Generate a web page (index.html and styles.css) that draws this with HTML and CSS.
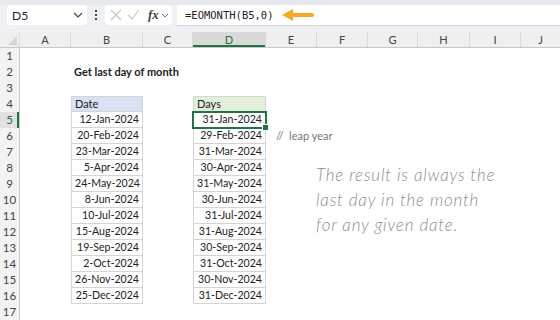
FILE: index.html
```html
<!DOCTYPE html>
<html lang="en">
<head>
    <meta charset="UTF-8">
    <meta name="viewport" content="width=device-width, initial-scale=1.0">
    <title>Get last day of month</title>
    <link rel="stylesheet" href="styles.css">
</head>
<body>
    <div class="toolbar">
        <div class="namebox">
            <span>D5</span>
            <svg class="chev" width="10" height="6" viewBox="0 0 10 6"><path d="M1 1l4 4 4-4" fill="none" stroke="#444" stroke-width="1.2"/></svg>
        </div>
        <div class="dots"><i></i><i></i><i></i></div>
        <div class="fxbox">
            <svg width="12" height="12" viewBox="0 0 12 12"><path d="M1 1l10 10M11 1L1 11" stroke="#c4c4c4" stroke-width="1.1"/></svg>
            <svg width="13" height="12" viewBox="0 0 13 12"><path d="M1 6l4 4 7-9" fill="none" stroke="#c4c4c4" stroke-width="1.1"/></svg>
            <span class="fx">fx</span>
            <svg width="8" height="5" viewBox="0 0 8 5"><path d="M1 1l3 3 3-3" fill="none" stroke="#777" stroke-width="1"/></svg>
        </div>
        <div class="formula">
            <span>=EOMONTH(B5,0)</span>
            <svg class="arrow" width="32" height="14" viewBox="0 0 32 14"><path d="M10 7h20" stroke="#f5a91c" stroke-width="4" stroke-linecap="round"/><path d="M0 7l11-6v12z" fill="#f5a91c"/></svg>
        </div>
    </div>

    <div class="sheet">
        <div class="row head">
            <div class="corner"></div>
            <div>A</div><div>B</div><div>C</div><div class="sel">D</div><div>E</div>
            <div>F</div><div>G</div><div>H</div><div>I</div><div>J</div>
        </div>
        <div class="row"><div class="rh">1</div></div>
        <div class="row"><div class="rh">2</div><div class="cell cb title">Get last day of month</div></div>
        <div class="row"><div class="rh">3</div></div>
        <div class="row"><div class="rh">4</div><div class="cell cb tb top hd-date">Date</div><div class="cell cd tb top hd-days">Days</div></div>
        <div class="row"><div class="rh sel">5</div><div class="cell cb tb num">12-Jan-2024</div><div class="cell cd tb num active">31-Jan-2024</div></div>
        <div class="row"><div class="rh">6</div><div class="cell cb tb num">20-Feb-2024</div><div class="cell cd tb num">29-Feb-2024</div><div class="cell ce note">// &nbsp;leap year</div></div>
        <div class="row"><div class="rh">7</div><div class="cell cb tb num">23-Mar-2024</div><div class="cell cd tb num">31-Mar-2024</div></div>
        <div class="row"><div class="rh">8</div><div class="cell cb tb num">5-Apr-2024</div><div class="cell cd tb num">30-Apr-2024</div></div>
        <div class="row"><div class="rh">9</div><div class="cell cb tb num">24-May-2024</div><div class="cell cd tb num">31-May-2024</div></div>
        <div class="row"><div class="rh">10</div><div class="cell cb tb num">8-Jun-2024</div><div class="cell cd tb num">30-Jun-2024</div></div>
        <div class="row"><div class="rh">11</div><div class="cell cb tb num">10-Jul-2024</div><div class="cell cd tb num">31-Jul-2024</div></div>
        <div class="row"><div class="rh">12</div><div class="cell cb tb num">15-Aug-2024</div><div class="cell cd tb num">31-Aug-2024</div></div>
        <div class="row"><div class="rh">13</div><div class="cell cb tb num">19-Sep-2024</div><div class="cell cd tb num">30-Sep-2024</div></div>
        <div class="row"><div class="rh">14</div><div class="cell cb tb num">2-Oct-2024</div><div class="cell cd tb num">31-Oct-2024</div></div>
        <div class="row"><div class="rh">15</div><div class="cell cb tb num">26-Nov-2024</div><div class="cell cd tb num">30-Nov-2024</div></div>
        <div class="row"><div class="rh">16</div><div class="cell cb tb num">25-Dec-2024</div><div class="cell cd tb num">31-Dec-2024</div></div>
        <div class="row"><div class="rh">17</div></div>

        <div class="textbox">The result is always the<br>last day in the month<br>for any given date.</div>
    </div>
</body>
</html>
```

FILE: styles.css
```css
body {
    margin: 0;
    width: 560px;
    height: 320px;
    overflow: hidden;
    background: #fff;
    font-family: Lato, "Liberation Sans", sans-serif;
    color: #222;
}

/* formula bar */
.toolbar {
    height: 32px;
    box-sizing: border-box;
    background: #eef0f3;
    border-top: 5px solid #e6e9ed;
    display: flex;
    align-items: flex-start;
    padding-left: 7px;
}
.namebox {
    width: 80px;
    height: 20px;
    box-sizing: border-box;
    background: #fff;
    border-radius: 4px;
    display: flex;
    align-items: center;
    justify-content: space-between;
    padding: 0 4px 0 5px;
    font-size: 12px;
    color: #222;
}
.dots {
    width: 18px;
    height: 20px;
    display: flex;
    flex-direction: column;
    align-items: center;
    justify-content: center;
    gap: 2px;
}
.dots i {
    width: 2px;
    height: 2px;
    background: #444;
}
.fxbox {
    width: 67px;
    height: 20px;
    box-sizing: border-box;
    background: #fff;
    border-radius: 4px;
    display: flex;
    align-items: center;
    gap: 5px;
    padding-left: 5px;
}
.fx {
    font-family: "Liberation Serif", serif;
    font-style: italic;
    font-weight: bold;
    font-size: 13px;
    color: #444;
    margin-left: 3px;
    margin-right: -3px;
}
.formula {
    flex: 1;
    height: 20px;
    margin-left: 5px;
    background: #fff;
    border-bottom: 1px solid #d5d9df;
    display: flex;
    align-items: center;
    padding-left: 8px;
    font-family: "DejaVu Sans Mono", monospace;
    font-size: 10.5px;
    color: #222;
}
.arrow {
    margin-left: 8px;
}

/* grid */
.sheet {
    position: relative;
}
.row {
    display: grid;
    grid-template-columns: 20px 51px 72px 50px 73px 51px 51px 50px 52px 51px 40px;
    height: 16px;
}
.head {
    height: 15px;
    background: #efefef;
    border-bottom: 1px solid #c8c8c8;
    font-size: 11px;
    color: #444;
}
.head div {
    border-right: 1px solid #dadada;
    text-align: center;
    line-height: 15px;
}
.head .corner {
    position: relative;
    background: #efefef;
}
.head .corner::after {
    content: "";
    position: absolute;
    right: 2px;
    bottom: 2px;
    border-left: 9px solid transparent;
    border-bottom: 9px solid #d6d6d6;
}
.head .sel {
    background: #d9d9d9;
    color: #1e7145;
    box-shadow: inset 0 -2px 0 #217346;
}
.rh {
    grid-column: 1;
    background: #f3f3f3;
    border-right: 1px solid #c8c8c8;
    font-size: 11.5px;
    color: #444;
    text-align: center;
    line-height: 16px;
}
.rh.sel {
    color: #1e7145;
    background: #e1e1e1;
    box-shadow: inset -2px 0 0 #217346;
}

.cell {
    grid-row: 1;
    font-size: 10.6px;
    line-height: 15px;
    padding: 0 3px;
    white-space: nowrap;
    box-sizing: border-box;
}
.cb { grid-column: 3; }
.cd { grid-column: 5; }
.ce { grid-column: 6; }

.title {
    font-weight: bold;
    font-size: 11px;
    line-height: 16px;
}
.tb {
    border: 1px solid #d4d4d4;
    border-top: none;
}
.tb.top {
    border-top: 1px solid #d4d4d4;
    line-height: 14px;
    font-size: 11px;
}
.hd-date { background: #d9e1f2; }
.hd-days { background: #e2efda; }
.num { text-align: right; }
.active {
    position: relative;
    outline: 2px solid #217346;
    outline-offset: -1px;
}
.active::after {
    content: "";
    position: absolute;
    right: -4px;
    bottom: -4px;
    width: 5px;
    height: 5px;
    background: #217346;
    border: 1px solid #fff;
}
.note {
    color: #777;
    font-size: 11px;
    padding-left: 10px;
    overflow: visible;
}
.textbox {
    position: absolute;
    left: 316px;
    top: 130px;
    font-style: italic;
    font-weight: 300;
    font-size: 17px;
    line-height: 25px;
    color: #8e8e8e;
    letter-spacing: 0.8px;
}
```
